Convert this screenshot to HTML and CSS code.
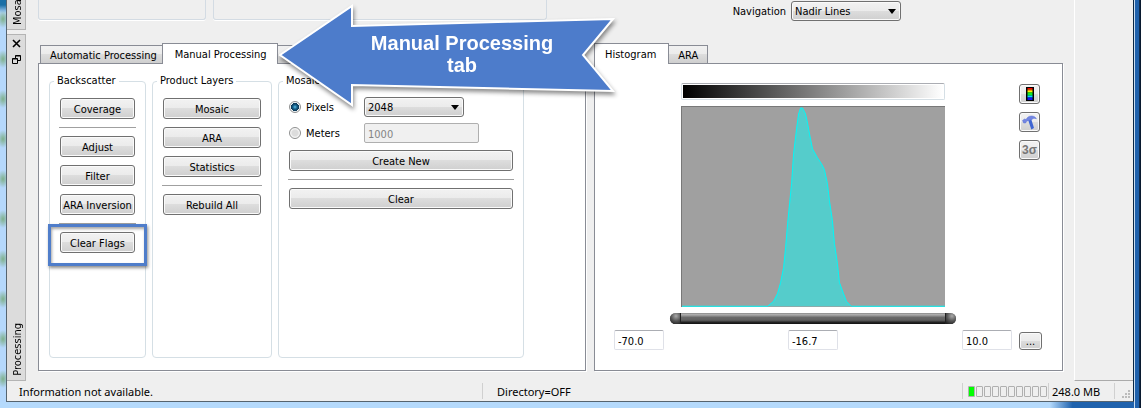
FILE: index.html
```html
<!DOCTYPE html>
<html lang="en">
<head>
    <meta charset="utf-8">
    <title>Processing</title>
    <link rel="stylesheet" href="styles.css">
</head>
<body>
    <div class="frame">
        <div class="window">
            <div class="main">
                <div class="docks">
                    <div class="dock dock-top">
                        <div class="dock-title"><span class="dock-name">Mosaic</span></div>
                        <div class="dock-content top-content">
                            <div class="top-boxes">
                                <div class="box"></div>
                                <div class="box"></div>
                            </div>
                            <div class="navigation">
                                <label for="navigation">Navigation</label>
                                <span class="select">
                                    <select id="navigation">
                                        <option>Nadir Lines</option>
                                    </select>
                                </span>
                            </div>
                        </div>
                    </div>

                    <div class="dock dock-bottom">
                        <div class="dock-title">
                            <button class="dock-btn" aria-label="Close">
                                <svg width="9" height="9" viewBox="0 0 9 9"><path d="M1 1l7 7M8 1l-7 7" stroke="#000" stroke-width="1.6"/></svg>
                            </button>
                            <button class="dock-btn" aria-label="Float">
                                <svg width="9" height="9" viewBox="0 0 9 9"><path d="M3.5 3V.5h5v5H6M.5 3.500h5v5h-5z M.5 4h5M3.500 1h5" fill="none" stroke="#000"/></svg>
                            </button>
                            <span class="dock-name">Processing</span>
                        </div>
                        <div class="dock-content panels">
                            <div class="tab-widget">
                                <div class="tabs">
                                    <button class="tab">Automatic Processing</button>
                                    <button class="tab active">Manual Processing</button>
                                    <button class="tab tab-blank" aria-label="More"></button>
                                </div>
                                <div class="panel processing">
                                    <fieldset class="group">
                                        <legend>Backscatter</legend>
                                        <button class="btn">Coverage</button>
                                        <hr>
                                        <button class="btn">Adjust</button>
                                        <button class="btn">Filter</button>
                                        <button class="btn">ARA Inversion</button>
                                        <hr>
                                        <div class="marked"><button class="btn">Clear Flags</button></div>
                                    </fieldset>
                                    <fieldset class="group">
                                        <legend>Product Layers</legend>
                                        <button class="btn">Mosaic</button>
                                        <button class="btn">ARA</button>
                                        <button class="btn">Statistics</button>
                                        <hr>
                                        <button class="btn">Rebuild All</button>
                                    </fieldset>
                                    <fieldset class="group">
                                        <legend>Mosaic</legend>
                                        <div class="sizes">
                                            <label><input type="radio" name="size" checked>Pixels</label>
                                            <span class="select">
                                                <select aria-label="Pixels">
                                                    <option>2048</option>
                                                </select>
                                            </span>
                                            <label><input type="radio" name="size">Meters</label>
                                            <input type="text" class="text meters" value="1000" aria-label="Meters" disabled>
                                        </div>
                                        <button class="btn">Create New</button>
                                        <hr>
                                        <button class="btn">Clear</button>
                                    </fieldset>
                                </div>
                            </div>

                            <div class="tab-widget">
                                <div class="tabs tabs-right">
                                    <button class="tab active">Histogram</button>
                                    <button class="tab">ARA</button>
                                </div>
                                <div class="panel histogram">
                                    <div class="ramp"></div>
                                    <svg class="plot" viewBox="0 0 264 201" preserveAspectRatio="none">
                                        <path d="M0 200H86L92 195L96 187L99 176L102 161L104 141L106 117L108 97L110 77L112 47L115 22L117 7L119 1H121L124 7L126 16L128 27L131 42L136 51L140 57L143 63L146 77L148 94L151 114L153 137L156 157L158 176L162 187L165 195L170 200H264" fill="#55cccb" stroke="#00f8f8"/>
                                    </svg>
                                    <div class="tools">
                                        <button class="tool" aria-label="Colors">
                                            <svg width="8" height="14" viewBox="0 0 8 14">
                                                <rect width="8" height="14" fill="#000"/>
                                                <rect x="1.5" y="1" width="5" height="1.5" fill="#f00"/>
                                                <rect x="1.5" y="2.5" width="5" height="1.5" fill="#f90"/>
                                                <rect x="1.5" y="4" width="5" height="1.5" fill="#ef0"/>
                                                <rect x="1.5" y="5.5" width="5" height="3" fill="#1e2"/>
                                                <rect x="1.5" y="8.5" width="5" height="2" fill="#0df"/>
                                                <rect x="1.5" y="10.5" width="5" height="2.5" fill="#11e"/>
                                            </svg>
                                        </button>
                                        <button class="tool" aria-label="Settings">
                                            <svg width="15" height="15" viewBox="0 0 15 15">
                                                <path d="M6 4.500L9 3.500L12 13L9.300 14.500z" fill="#3f66d2"/>
                                                <path d="M.5 5.500L2.500 4L4.200 4.600C5 2.200 7 1 9.600 1C11.800 1 13.400 2 14.400 3.800C12.600 3 11.200 3 10 4.400L7 5.500L4.600 6.200L3.600 8L1.600 8z" fill="#7285e0" stroke="#5b70d4" stroke-width=".5"/>
                                            </svg>
                                        </button>
                                        <button class="tool sigma">3σ</button>
                                    </div>
                                    <div class="range">
                                        <input type="range" class="low" value="0" aria-label="Minimum">
                                        <input type="range" class="high" value="100" aria-label="Maximum">
                                    </div>
                                    <input type="text" class="text value" value="-70.0" aria-label="Low">
                                    <input type="text" class="text value value-mid" value="-16.7" aria-label="Middle">
                                    <input type="text" class="text value value-high" value="10.0" aria-label="High">
                                    <button class="btn more">...</button>
                                </div>
                            </div>

                            <div class="callout">
                                <svg width="340" height="112" viewBox="0 0 340 112">
                                    <path d="M2 52L74 3V23L335 16L305 52L335 88L74 82V102z" fill="#4d7ccb" stroke="#fff" stroke-width="2"/>
                                </svg>
                                <p>Manual Processing tab</p>
                            </div>
                        </div>
                    </div>
                </div>
                <div class="side"></div>
            </div>

            <div class="status">
                <span class="status-info">Information not available.</span>
                <span class="status-dir">Directory=OFF</span>
                <span class="cells">
                    <i class="on"></i><i></i><i></i><i></i><i></i><i></i><i></i><i></i><i></i><i></i>
                </span>
                <span class="memory">248.0 MB</span>
                <span class="grip">
                    <svg width="9" height="9" viewBox="0 0 9 9"><path d="M7 0h2v2H7zM7 3h2v2H7zM7 6h2v2H7zM4 3h2v2H4zM4 6h2v2H4zM1 6h2v2H1z" fill="#bbb"/></svg>
                </span>
            </div>
        </div>
    </div>
</body>
</html>
```
FILE: styles.css
```css
* {
    box-sizing: border-box;
}

body {
    margin: 0;
    font-family: "DejaVu Sans Condensed", "Noto Sans", sans-serif;
    font-size: 11px;
    color: #000;
}

button,
input,
select {
    font: inherit;
    color: inherit;
    margin: 0;
}

/* window frame */
.frame {
    display: flex;
    min-height: 100vh;
    padding: 0 7px 6px 6px;
    background:
        linear-gradient(90deg, #c8dcf0 1px, #1f62ad 1px, #1f62ad 5px, #16375f 5px, #05101f) right / 7px 100% no-repeat,
        linear-gradient(90deg, #b5dafc 92%, #1f62ad 94%) bottom / 100% 6px no-repeat,
        linear-gradient(#1a6fa6, #1a6fa6 5px, transparent 13px) left top / 6px 14px no-repeat,
        radial-gradient(ellipse 6px 9px at 3px 19px, #7fb08c, transparent) left top / 6px 40px repeat-y,
        #b5d8fc;
}

.window {
    display: flex;
    flex-direction: column;
    flex: 1;
    min-width: 0;
    background: #efefef;
    border: 1px solid #56646f;
    border-top: none;
    border-right-color: #0a2744;
}

.main {
    display: flex;
    flex: 1;
}

.docks {
    display: flex;
    flex-direction: column;
    flex: 1;
    gap: 4px;
    min-width: 0;
}

.side {
    width: 59px;
    border-left: 1px solid #fff;
    border-bottom: 1px solid #aaa;
}

.dock {
    display: flex;
}

.dock-top {
    height: 30px;
}

.dock-bottom {
    flex: 1;
}

.dock-title {
    display: flex;
    flex-direction: column;
    align-items: center;
    width: 19px;
    padding: 4px 0;
    background: #dcdcdc;
    border: 1px solid #b4b4b4;
    border-left: none;
    overflow: hidden;
}

.dock-top .dock-title {
    justify-content: flex-end;
    border-top: none;
}

.dock-btn {
    display: flex;
    padding: 0;
    margin-bottom: 7px;
    border: none;
    background: none;
}

.dock-name {
    margin-top: auto;
    padding-right: 4px;
    writing-mode: vertical-rl;
    transform: rotate(180deg);
    line-height: 14px;
}

.dock-content {
    flex: 1;
    min-width: 0;
    padding: 0 11px 0 12px;
}

/* upper dock */
.top-content {
    display: flex;
    justify-content: space-between;
    align-items: flex-start;
}

.top-boxes {
    display: flex;
    flex: 0 1 509px;
    gap: 7px;
}

.box {
    flex: 2;
    height: 20px;
    border: 1px solid #d3dbe3;
    border-top: none;
    border-radius: 0 0 3px 3px;
    box-shadow: 0 1px #fff;
}

.box:first-child {
    flex: 1;
}

.navigation {
    display: flex;
    align-items: center;
    gap: 5px;
    padding: 1px 162px 0 0;
}

.select {
    position: relative;
    display: block;
    width: 100px;
}

.navigation .select {
    width: 110px;
}

.select::after {
    content: "";
    position: absolute;
    top: 8px;
    right: 5px;
    border: 4px solid transparent;
    border-top: 5px solid #000;
    border-bottom: none;
    pointer-events: none;
}

select,
.btn,
.tool {
    border: 1px solid #707070;
    border-radius: 3px;
    background: linear-gradient(#f2f2f2, #ebebeb 49%, #dddddd 50%, #cfcfcf);
    box-shadow: inset 0 0 0 1px #fafafa;
}

select {
    display: block;
    width: 100%;
    height: 20px;
    padding: 1px 3px 0;
    appearance: none;
}

/* tabs */
.panels {
    position: relative;
    display: grid;
    grid-template-columns: 548fr 469fr;
    gap: 8px;
    padding-top: 9px;
    padding-bottom: 10px;
}

.tab-widget {
    display: flex;
    flex-direction: column;
    min-width: 0;
}

.tabs {
    display: flex;
    align-items: flex-end;
    height: 21px;
    padding-left: 2px;
    margin-bottom: -1px;
    z-index: 1;
}

.tabs-right {
    padding-left: 0;
}

.tab {
    height: 19px;
    padding: 1px 5px 0 9px;
    border: 1px solid #898c95;
    border-right: none;
    background: linear-gradient(#f1f1f1, #ebebeb 49%, #dddddd 50%, #cfcfcf);
    white-space: nowrap;
}

.tab:last-child {
    padding-right: 9px;
    border-right: 1px solid #898c95;
}

.tab.active {
    height: 21px;
    padding: 0 10px 0 12px;
    background: #fff;
    border-bottom: none;
    border-right: 1px solid #898c95;
}

.tab.active + .tab {
    border-left: none;
}

.tabs-right .tab.active {
    padding: 0 12px 0 10px;
}

.tab-blank {
    width: 100px;
}

.panel {
    flex: 1;
    background: #fff;
    border: 1px solid #898c95;
    box-shadow: 1px 1px #fff;
}

/* manual processing */
.processing {
    display: grid;
    grid-template-columns: 97fr 120fr 246fr;
    gap: 6px;
    padding: 10px 61px 12px 10px;
}

.group {
    display: flex;
    flex-direction: column;
    gap: 8px;
    min-width: 0;
    margin: 0;
    padding: 10px;
    border: 1px solid #d5dfe5;
    border-radius: 4px;
}

.group legend {
    margin-left: -6px;
    padding: 0 3px;
    line-height: 14px;
}

.group hr {
    width: calc(100% + 2px);
    height: 1px;
    margin: 0 -1px;
    border: none;
    background: #a0a0a0;
    flex: none;
}

.btn {
    width: 100%;
    height: 21px;
    padding: 2px 0 0;
    white-space: nowrap;
}

.marked {
    position: relative;
}

.marked::after {
    content: "";
    position: absolute;
    inset: -8px -12px -13px;
    border: 3px solid #4f7dca;
    box-shadow: 1px 2px 3px rgba(0, 0, 0, 0.45), inset 1px 2px 3px rgba(0, 0, 0, 0.35);
    pointer-events: none;
}

.sizes {
    display: grid;
    grid-template-columns: 75px 1fr;
    gap: 6px 0;
    margin: -1px 0;
}

.sizes label {
    display: flex;
    align-items: center;
    gap: 5px;
}

input[type="radio"] {
    appearance: none;
    width: 12px;
    height: 12px;
    border: 1px solid #8e8f8f;
    border-radius: 50%;
    background: radial-gradient(circle, #dcdcdc 40%, #f8f8f8 65%);
}

input[type="radio"]:checked {
    background: radial-gradient(circle at 5px 5px, #5cc3ea, #17608a 2px, #0b3551 4px, #f0f4f6 4px);
}

.text {
    height: 20px;
    padding: 2px 3px 0;
    border: 1px solid #dfe1e8;
    border-top-color: #abadb3;
    border-radius: 2px;
    background: #fff;
}

.meters {
    width: 115px;
    border-color: #afafaf;
    background: #f0f0f0;
    color: #848484;
}

/* histogram */
.histogram {
    display: grid;
    grid-template-columns: 67px 1fr 74px 23px;
    grid-template-rows: 17px 1fr 11px 20px;
    row-gap: 6px;
    padding: 19px 20px 20px 19px;
}

.ramp {
    grid-area: 1 / 2;
    padding: 1px;
    border: 1px solid #d5dfe5;
    border-top-color: #abadb3;
    border-radius: 2px;
    background: linear-gradient(90deg, #000, #fff) content-box;
}

.plot {
    grid-area: 2 / 2;
    width: 100%;
    height: 100%;
    min-height: 0;
    background: #a0a0a0;
    border: 1px solid #787878;
    border-width: 1px 0 0 1px;
}

.tools {
    grid-area: 1 / 4 / 3 / 5;
    display: flex;
    flex-direction: column;
    gap: 8px;
    padding-top: 1px;
}

.tool {
    display: flex;
    align-items: center;
    justify-content: center;
    width: 21px;
    height: 20px;
    padding: 0;
}

.sigma {
    color: #777;
    font: bold 12px "Liberation Sans", Arial, sans-serif;
}

.range {
    grid-area: 3 / 2;
    display: grid;
    margin: 0 -11px;
    border-radius: 6px;
    background: linear-gradient(#8a8a8a, #b0b0b0 15%, #6a6a6a 40%, #606060 65%, #222 85%, #111);
}

.range input {
    grid-area: 1 / 1;
    width: 100%;
    height: 11px;
    appearance: none;
    background: none;
    pointer-events: none;
}

.range input::-webkit-slider-thumb {
    appearance: none;
    width: 11px;
    height: 11px;
    border-radius: 6px 0 0 6px;
    border-right: 1px solid #222;
    background: radial-gradient(circle at 6px 3px, #aaa, #555 5px, #222 9px);
    pointer-events: auto;
}

.range .high::-webkit-slider-thumb {
    border-radius: 0 6px 6px 0;
    border-right: none;
    border-left: 1px solid #222;
}

.value {
    grid-area: 4 / 1;
    width: 50px;
}

.value-mid {
    grid-area: 4 / 2;
    justify-self: center;
}

.value-high {
    grid-area: 4 / 3;
    justify-self: end;
    margin-right: 7px;
}

.more {
    grid-area: 4 / 4;
    align-self: end;
    height: 18px;
    line-height: 12px;
}

/* callout arrow */
.callout {
    position: absolute;
    top: -31px;
    left: 252px;
    width: 340px;
    height: 112px;
    z-index: 2;
    filter: drop-shadow(1px 3px 2px rgba(0, 0, 0, 0.45));
}

.callout p {
    position: absolute;
    top: 29px;
    left: 84px;
    width: 200px;
    margin: 0;
    color: #fff;
    font: bold 20px/22px "Liberation Sans", Arial, sans-serif;
    text-align: center;
}

/* status bar */
.status {
    display: flex;
    align-items: center;
    height: 20px;
    font-family: "Noto Sans", "Open Sans", sans-serif;
    line-height: 17px;
}

.status span {
    height: 16px;
}

.status-info {
    flex: 476;
    padding-left: 12px;
}

.status-dir {
    flex: 478;
    padding-left: 14px;
    border-left: 1px solid #d0d0d0;
}

.cells {
    display: flex;
    align-items: center;
    gap: 1px;
    width: 86px;
    padding-left: 5px;
    border-left: 1px solid #d0d0d0;
}

.cells i {
    width: 7px;
    height: 11px;
    border: 1px solid #b0b0b0;
    border-radius: 1px;
}

.cells .on {
    background: #0f0;
}

.memory {
    width: 66px;
    padding-left: 3px;
    border-left: 1px solid #d0d0d0;
}

.grip {
    display: flex;
    align-items: flex-end;
    justify-content: flex-end;
    width: 19px;
    padding-right: 3px;
    border-left: 1px solid #d0d0d0;
}
```
